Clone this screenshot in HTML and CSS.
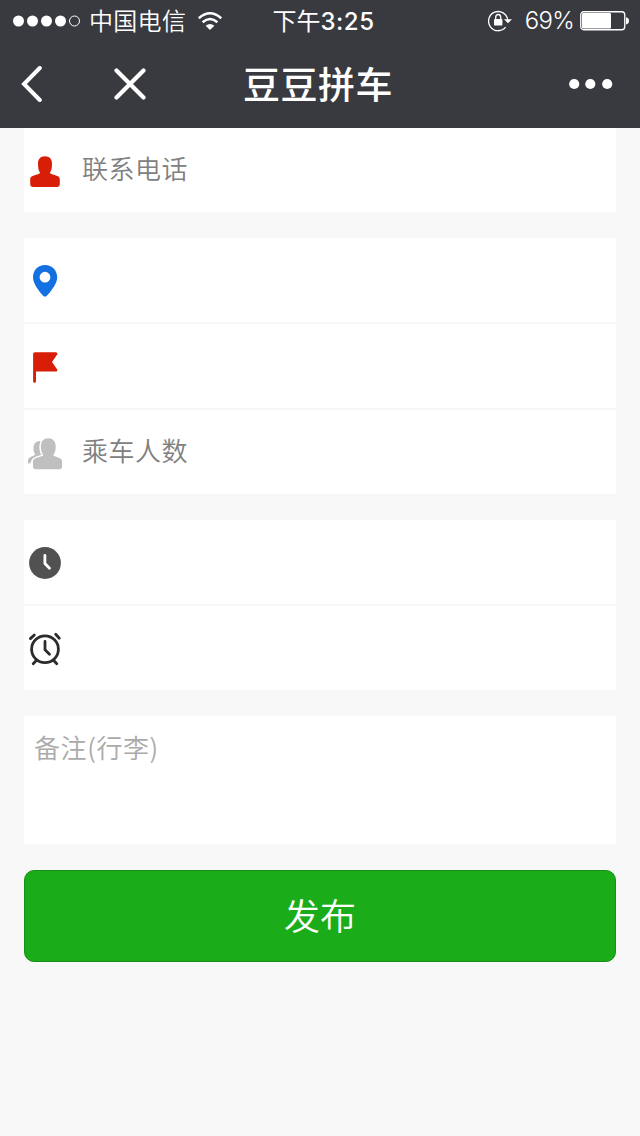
FILE: index.html
```html
<!DOCTYPE html>
<html lang="zh-CN">
<head>
<meta charset="utf-8">
<title>豆豆拼车</title>
<link rel="stylesheet" href="styles.css">
</head>
<body>
<header class="header">
  <div class="status">
    <div class="status-left">
      <svg class="signal" width="68" height="12" viewBox="0 0 68 12" fill="#fff"><circle cx="5.5" cy="6" r="5.5"/><circle cx="19.5" cy="6" r="5.5"/><circle cx="33.5" cy="6" r="5.5"/><circle cx="47.5" cy="6" r="5.5"/><circle cx="61.5" cy="6" r="5" fill="none" stroke="#fff"/></svg>
      <span class="carrier">中国电信</span>
      <svg class="wifi" width="26" height="20" viewBox="0 0 26 20" fill="none" stroke="#fff" stroke-width="2.5"><path d="M1.8 7.2Q13 -2.8 24.2 7.2"/><path d="M5.6 11.3Q13 4.7 20.4 11.3"/><path d="M8.6 14.8Q13 11 17.4 14.8L13 19Z" fill="#fff" stroke="none"/></svg>
    </div>
    <span class="time">下午<b>3:25</b></span>
    <div class="status-right">
      <svg width="24" height="22" viewBox="0 0 24 22"><path d="M19.7 10A9.6 9.6 0 1 0 17.6 17.2" fill="none" stroke="#fff" stroke-width="1.3"/><path d="M16 9.3h8l-4 4z" fill="#fff"/><rect x="6" y="9" width="8.4" height="6.5" rx=".7" fill="#fff"/><path d="M7.7 9.5V7.2a2.5 2.7 0 0 1 5 0v2.3" fill="none" stroke="#fff" stroke-width="1.3"/></svg>
      <span class="percent">69%</span>
      <svg width="49" height="20" viewBox="0 0 49 20"><rect x=".75" y=".75" width="44" height="18" rx="3" fill="none" stroke="#fff" stroke-width="1.3"/><rect x="2" y="2" width="29" height="15.5" rx="1.3" fill="#fff"/><path d="M46 6.2q3 .5 3 3.6t-3 3.6z" fill="#fff"/></svg>
    </div>
  </div>
  <nav class="nav">
    <svg class="back" width="22" height="36" viewBox="0 0 22 36" fill="none" stroke="#fff" stroke-width="4"><path d="M18.8 2L3 18L18.8 34" stroke-linecap="round"/></svg>
    <svg class="close" width="32" height="32" viewBox="0 0 32 32" stroke="#fff" stroke-width="4.2"><path d="M2.5 2.5L29.5 29.5M29.5 2.5L2.5 29.5" stroke-linecap="round"/></svg>
    <h1 class="title">豆豆拼车</h1>
    <svg class="more" width="44" height="12" viewBox="0 0 44 12" fill="#fff"><circle cx="5.2" cy="6" r="5.1"/><circle cx="21.3" cy="6" r="5.1"/><circle cx="38.2" cy="6" r="5.1"/></svg>
  </nav>
</header>
<main class="form">
  <section class="group">
    <div class="row">
      <svg class="icon" viewBox="0 0 42 84" fill="#d81e06"><path d="M21 28.2C25.5 28.2 28 31 28 35.5C28 40 27.4 43 25.8 44.8C26.3 46.1 29 46.4 32 47.4C35 48.4 35.8 49.3 35.8 51.5V56Q35.8 59 32.8 59H9.2Q6.2 59 6.2 56V51.5C6.2 49.3 7 48.4 10 47.4C13 46.4 15.7 46.1 16.2 44.8C14.6 43 14 40 14 35.5C14 31 16.5 28.2 21 28.2Z"/></svg>
      <span class="label">联系电话</span>
    </div>
  </section>
  <section class="group">
    <div class="row">
      <svg class="icon" viewBox="0 0 42 84" fill="#1270e0"><path fill-rule="evenodd" d="M21 27C28 27 33.2 32.4 33.2 39.2C33.2 45.5 27 53.3 22.8 57.7Q21 59.5 19.2 57.7C15 53.3 9 45.5 9 39.2C9 32.4 14 27 21 27ZM21 33.8a5.4 5.4 0 1 0 0 10.8a5.4 5.4 0 1 0 0-10.8Z"/></svg>
    </div>
    <div class="row">
      <svg class="icon" viewBox="0 0 42 84" fill="#d81e06"><path d="M11 28.2H32Q34.4 28.8 33 30.8L28 38L33 45.2Q34.2 47 32 47.6H12V57.3Q12 58.8 10.6 58.8Q9.1 58.8 9.1 57.3V30.1Q9.1 28.2 11 28.2Z"/></svg>
    </div>
    <div class="row">
      <svg class="icon" viewBox="0 0 42 84" fill="#bfbfbf"><path d="M16.2 31.1C12 31.2 9.5 33.8 9.5 37.7C9.5 41 10 42.7 11.2 44.5C10.8 46.2 4 46.4 4 50.3V53.2Q5.6 54.2 6.6 52.8C7 49.4 14.6 48.4 17.8 46.8V31.4Z"/><path d="M24.3 28.2C28.8 28.2 31.7 31.4 31.7 36.2C31.7 40.5 30.8 43.3 29.1 45.3C29.8 47.1 38.1 47.2 38.1 51.3V56.2Q38.1 59.3 35 59.3H12.1Q9 59.3 9 56.2V51.3C9 47.2 18.8 47.1 19.5 45.3C17.8 43.3 16.9 40.5 16.9 36.2C16.9 31.4 19.8 28.2 24.3 28.2Z" stroke="#fff" stroke-width="3.2" paint-order="stroke"/></svg>
      <span class="label">乘车人数</span>
    </div>
  </section>
  <section class="group">
    <div class="row">
      <svg class="icon" viewBox="0 0 42 84"><circle cx="21" cy="43" r="15.9" fill="#515151"/><path d="M20.9 35.3V43.5L25.5 48.3" fill="none" stroke="#fff" stroke-width="2.8" stroke-linecap="round" stroke-linejoin="round"/></svg>
    </div>
    <div class="row">
      <svg class="icon" viewBox="0 0 42 84" fill="none" stroke="#2c2c2c" stroke-width="2.8" stroke-linecap="round" stroke-linejoin="round"><circle cx="21" cy="43.2" r="13.4"/><path d="M21 35.5V43.8L25.5 48.2M6.4 32.6L10.3 29M31.7 28.3L35.3 32.2M12.5 54.2L9.2 57.7M29.5 54.2L32.8 57.7"/></svg>
    </div>
  </section>
  <div class="note">备注(行李)</div>
  <button class="submit" type="button">发布</button>
</main>
</body>
</html>
```
FILE: styles.css
```css
* { box-sizing: border-box; }
body {
  margin: 0;
  min-height: 1136px;
  background: #f8f8f8;
  font-family: "Noto Sans CJK SC", sans-serif;
}
svg { display: block; flex: none; }
.header { height: 128px; background: #393a3f; color: #fff; }
.status {
  display: grid;
  grid-template-columns: 1fr auto 1fr;
  align-items: center;
  height: 40px;
  padding: 0 11px 0 13px;
  font-size: 24px;
  line-height: 40px;
}
.status-left, .status-right { display: flex; align-items: center; }
.status-right { justify-content: flex-end; }
.carrier { margin: -2px 0 0 8px; font-weight: 350; letter-spacing: 0.3px; }
.wifi { margin-left: 11px; }
.time { margin: 0 0 0 5px; white-space: nowrap; }
.time b { font-family: Inter, sans-serif; font-weight: 500; letter-spacing: 0.5px; }
.percent { margin: 0 6px 0 13px; font-family: Inter, sans-serif; font-size: 24px; font-weight: 350; letter-spacing: -0.7px; }
.nav { display: flex; align-items: center; height: 88px; padding: 0 27px 0 21px; }
.close { margin-left: 71px; }
.title { flex: none; margin: -1px 0 0 97px; font-size: 37px; line-height: 85px; font-weight: 500; letter-spacing: 0.5px; }
.more { margin-left: auto; }
.form { display: flex; flex-direction: column; gap: 26px; padding: 0 24px; }
.group { display: flex; flex-direction: column; gap: 2px; background: #f6f6f6; }
.row { display: flex; height: 84px; background: #fff; }
.icon { width: 42px; height: 84px; }
.label { margin-left: 16px; color: #808080; font-size: 26px; line-height: 80px; font-weight: 350; letter-spacing: 0.5px; }
.note { height: 128px; padding: 11px 10px; background: #fff; color: #aaa; font-size: 26px; line-height: 40px; letter-spacing: 0.6px; font-weight: 350; }
.submit {
  height: 92px;
  padding: 0 0 4px;
  border: 1px solid #178e17;
  border-radius: 10px;
  background: #1aad19;
  color: #fff;
  font-family: inherit;
  font-size: 36px;
  font-weight: 350;
}
```
